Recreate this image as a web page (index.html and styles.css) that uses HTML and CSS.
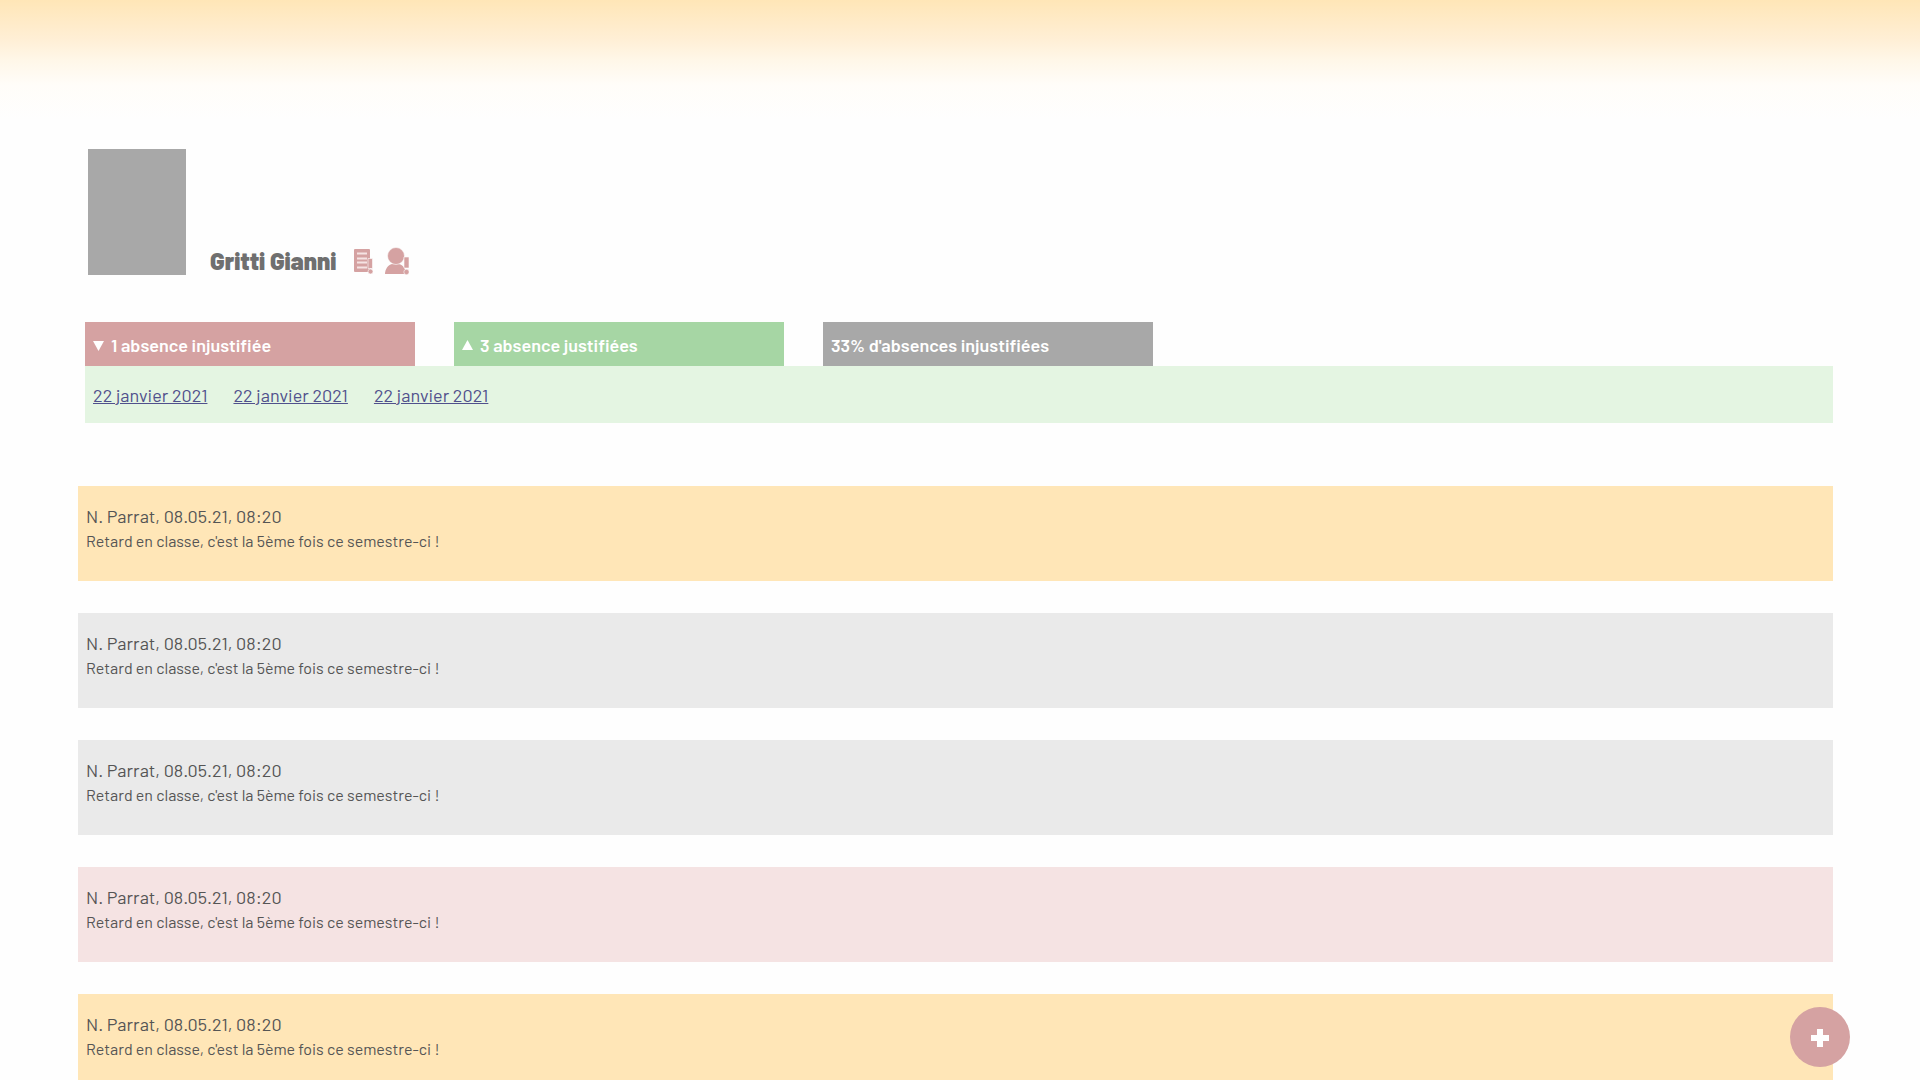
FILE: index.html
```html
<!DOCTYPE html>
<html lang="fr">
<head>
<meta charset="utf-8">
<meta name="viewport" content="width=device-width, initial-scale=1">
<title>Gritti Gianni</title>
<link rel="stylesheet" href="styles.css">
</head>
<body>
<main class="page">
  <header class="student">
    <div class="photo"></div>
    <h1 class="name">Gritti Gianni</h1>
    <div class="alerts">
      <svg class="icon" viewBox="0 0 24 28" aria-hidden="true">
        <path class="fill" d="M2 2h14q1 0 1 1v21q0 1-1 1H2q-1 0-1-1V3q0-1 1-1z"/>
        <path class="line" d="M4 6.500h10M4 11.500h10M4 15.500h10M4 20.500h10"/>
        <path class="fill edge" d="M15 11.500h4.500v10h-4.500z"/>
        <circle class="fill edge" cx="17.500" cy="24.500" r="2.500"/>
      </svg>
      <svg class="icon" viewBox="0 0 24 28" aria-hidden="true">
        <path class="fill" d="M0 27c0-5 3-9 7-10h7c4 1 7 5 7 10z"/>
        <circle class="fill edge" cx="11" cy="9" r="8.500"/>
        <path class="fill edge" d="M19 10h5v11h-5z"/>
        <circle class="fill edge" cx="21.500" cy="25" r="2.700"/>
      </svg>
    </div>
  </header>

  <section class="absences">
    <div class="tabs">
      <button type="button" class="tab red" aria-expanded="false"><svg class="arrow" viewBox="0 0 11 11" aria-hidden="true"><path d="M0 1h11L5.500 11z"/></svg>1 absence injustifiée</button>
      <button type="button" class="tab green" aria-expanded="true"><svg class="arrow" viewBox="0 0 11 11" aria-hidden="true"><path d="M0 10h11L5.500 0z"/></svg>3 absence justifiées</button>
      <div class="tab grey">33% d'absences injustifiées</div>
    </div>
    <div class="dates">
      <a href="#">22 janvier 2021</a>
      <a href="#">22 janvier 2021</a>
      <a href="#">22 janvier 2021</a>
    </div>
  </section>

  <section class="remarks">
    <article class="remark warning">
      <h2 class="author">N. Parrat, 08.05.21, 08:20</h2>
      <p class="text">Retard en classe, c'est la 5ème fois ce semestre-ci !</p>
    </article>
    <article class="remark neutral">
      <h2 class="author">N. Parrat, 08.05.21, 08:20</h2>
      <p class="text">Retard en classe, c'est la 5ème fois ce semestre-ci !</p>
    </article>
    <article class="remark neutral">
      <h2 class="author">N. Parrat, 08.05.21, 08:20</h2>
      <p class="text">Retard en classe, c'est la 5ème fois ce semestre-ci !</p>
    </article>
    <article class="remark danger">
      <h2 class="author">N. Parrat, 08.05.21, 08:20</h2>
      <p class="text">Retard en classe, c'est la 5ème fois ce semestre-ci !</p>
    </article>
    <article class="remark warning">
      <h2 class="author">N. Parrat, 08.05.21, 08:20</h2>
      <p class="text">Retard en classe, c'est la 5ème fois ce semestre-ci !</p>
    </article>
  </section>
</main>
<button type="button" class="add" aria-label="Ajouter une remarque">
  <svg class="plus" viewBox="0 0 18 18" aria-hidden="true"><path d="M6 0h6v6h6v6h-6v6H6v-6H0V6h6z"/></svg>
</button>
</body>
</html>
```
FILE: styles.css
```css
* {
  box-sizing: border-box;
}

body {
  margin: 0;
  background: #fefefe linear-gradient(#ffe6b7, #ffefd6 40px, #fff7e8 60px, #fffdf9 85px, #fefefe) no-repeat 0 0 / 100% 120px;
  color: #555;
  font-family: Barlow, Roboto, sans-serif;
  font-size: 18px;
  line-height: 24px;
}

.page {
  padding: 149px 87px 32px 78px;
}

.student {
  display: flex;
  align-items: flex-end;
  padding-left: 10px;
}

.photo {
  width: 98px;
  height: 126px;
  margin-right: 24px;
  background: #a8a8a8;
}

.name {
  margin: 0 17px 0 0;
  color: #6f6f6f;
  font-size: 24px;
  font-weight: 900;
  line-height: 28px;
}

.alerts {
  display: flex;
  gap: 8px;
}

.icon {
  width: 24px;
  height: 28px;
}

.fill {
  fill: #d5a2a2;
}

.edge {
  stroke: #fefefe;
  stroke-width: 0.6;
}

.line {
  fill: none;
  stroke: #f5e3e3;
  stroke-width: 2;
}

.absences {
  margin: 47px 0 63px 7px;
}

.tabs {
  display: flex;
  gap: 39px;
}

.tab {
  display: flex;
  align-items: center;
  width: 330px;
  height: 44px;
  padding: 2px 8px 0;
  border: 0;
  color: #fff;
  font: inherit;
  font-weight: 600;
}

.red {
  background: #d5a2a2;
}

.green {
  background: #a6d6a4;
}

.grey {
  background: #a8a8a8;
}

.arrow {
  width: 11px;
  height: 11px;
  margin-right: 7px;
  fill: #fff;
}

.dates {
  display: flex;
  gap: 26px;
  padding: 17px 8px 16px;
  background: #e4f5e2;
}

.dates a {
  color: #50508c;
}

.remarks {
  display: flex;
  flex-direction: column;
  gap: 32px;
}

.remark {
  padding: 18px 8px 28px;
}

.author {
  margin: 0 0 1px;
  font-size: 18px;
  font-weight: 400;
}

.text {
  margin: 0;
  font-size: 16px;
}

.warning {
  background: #ffe6b7;
}

.neutral {
  background: #eaeaea;
}

.danger {
  background: #f5e3e3;
}

.add {
  position: fixed;
  right: 70px;
  bottom: 13px;
  display: flex;
  align-items: center;
  justify-content: center;
  width: 60px;
  height: 60px;
  padding: 2px 0 0;
  border: 0;
  border-radius: 50%;
  background: #d5a2a2;
}

.plus {
  width: 18px;
  height: 18px;
  fill: #fff;
}
```
